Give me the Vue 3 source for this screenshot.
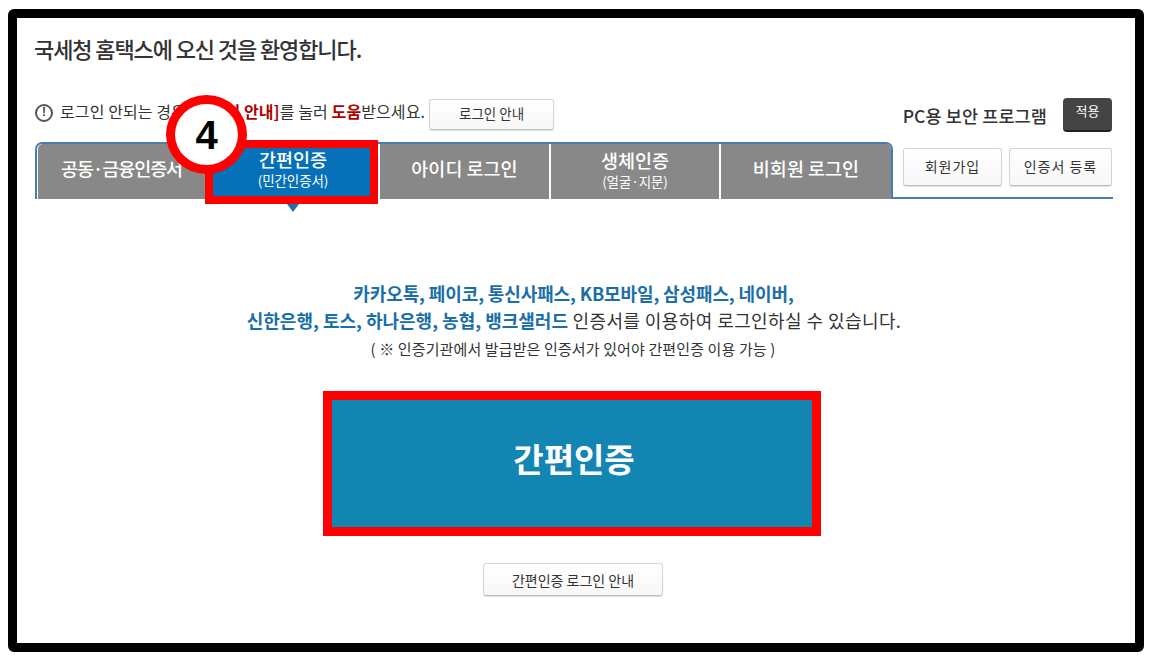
<script setup>
const tabs = [
  { name: '공동·금융인증서', w: 167 },
  { name: '간편인증', sub: '(민간인증서)', w: 173, active: true },
  { name: '아이디 로그인', w: 169 },
  { name: '생체인증', sub: '(얼굴·지문)', w: 168 },
  { name: '비회원 로그인', w: 170 }
]
</script>

<template>
  <main class="frame">
    <h1 class="title">국세청 홈택스에 오신 것을 환영합니다.</h1>

    <div class="notice-row">
      <div class="notice">
        <span class="info">!</span>
        <p>로그인 안되는 경우 <b>[로그인 안내]</b>를 눌러 <b>도움</b>받으세요.</p>
        <button class="btn help">로그인 안내</button>
      </div>
      <div class="security">
        <strong>PC용 보안 프로그램</strong>
        <button class="apply">적용</button>
      </div>
    </div>

    <div class="tab-row">
      <nav class="tabs">
        <div v-for="t in tabs" :key="t.name" class="tab" :class="{ active: t.active }" :style="{ width: t.w + 'px' }">
          <span class="tab-name">{{ t.name }}</span>
          <span v-if="t.sub" class="tab-sub">{{ t.sub }}</span>
        </div>
      </nav>
      <div class="side">
        <button class="btn join">회원가입</button>
        <button class="btn cert">인증서 등록</button>
      </div>
      <span class="step"><span>4</span></span>
    </div>

    <section class="body">
      <p class="line1">카카오톡, 페이코, 통신사패스, KB모바일, 삼성패스, 네이버,</p>
      <p class="line2"><em>신한은행, 토스, 하나은행, 농협, 뱅크샐러드</em> 인증서를 이용하여 로그인하실 수 있습니다.</p>
      <p class="note">( ※ 인증기관에서 발급받은 인증서가 있어야 간편인증 이용 가능 )</p>
      <button class="easy">간편인증</button>
      <button class="btn guide">간편인증 로그인 안내</button>
    </section>
  </main>
</template>

<style>
html, body { margin: 0; background: #fff; }
</style>

<style scoped>
.frame {
  box-sizing: border-box;
  width: 1136px;
  height: 643px;
  margin: 9px 0 0 8px;
  padding: 0 22px 0 17px;
  border: 9px solid #000;
  border-radius: 6px;
  background: #fff;
  overflow: hidden;
  font-family: "Noto Sans CJK KR", "Noto Sans", sans-serif;
  color: #333;
}
.title {
  margin: 0;
  padding-top: 15px;
  height: 34px;
  font-size: 22px;
  line-height: 30px;
  font-weight: 500;
  letter-spacing: -1.1px;
  color: #333;
}
.notice-row {
  display: flex;
  justify-content: space-between;
  margin-top: 32px;
  height: 43px;
}
.notice { display: flex; align-items: flex-start; }
.info {
  box-sizing: border-box;
  width: 18px;
  height: 18px;
  margin: 5px 7px 0 1px;
  border: 2.5px solid #555;
  border-radius: 50%;
  font: 700 12px/13px "Liberation Sans", sans-serif;
  text-align: center;
  color: #444;
}
.notice p {
  margin: 0 4px 0 0;
  font-size: 16px;
  line-height: 24px;
  letter-spacing: .1px;
  white-space: nowrap;
  color: #333;
}
.notice b { color: #b00000; font-weight: 700; }
.btn {
  box-sizing: border-box;
  border: 1px solid #d4d4d4;
  border-bottom-color: #bdbdbd;
  border-radius: 3px;
  background: linear-gradient(#fff, #f7f7f7);
  box-shadow: 0 1px 1px rgba(0, 0, 0, .12);
  font-family: inherit;
  color: #333;
  padding: 0;
  white-space: nowrap;
}
.help { width: 125px; height: 31px; font-size: 13.5px; padding-bottom: 3px; }
.security { display: flex; align-items: flex-start; }
.security strong {
  margin: 5px 16px 0 0;
  font-size: 17.5px;
  line-height: 24px;
  font-weight: 500;
  letter-spacing: .1px;
  color: #333;
}
.apply {
  box-sizing: border-box;
  width: 49px;
  height: 34px;
  margin-top: -1px;
  margin-right: 1px;
  padding: 0 0 7px;
  border: 0;
  border-bottom: 2px solid #222;
  border-radius: 4px;
  background: #444;
  color: #fff;
  font-family: inherit;
  font-size: 13px;
}
.tab-row { position: relative; display: flex; height: 58px; }
.tabs {
  box-sizing: border-box;
  flex: none;
  display: flex;
  gap: 2px;
  width: 858px;
  height: 57px;
  margin-left: 1px;
  padding: 0 1px;
  border: 2px solid #4a7ab8;
  border-bottom: 0;
  border-radius: 7px 7px 0 0;
}
.tab {
  box-sizing: border-box;
  flex: none;
  display: flex;
  flex-direction: column;
  align-items: center;
  justify-content: center;
  padding-bottom: 3px;
  background: #888;
  color: #fff;
}
.tab:first-child { border-radius: 5px 0 0 0; margin-right: -2px; }
.tab:first-child .tab-name { letter-spacing: -1.1px; }
.tab:last-child { border-radius: 0 5px 0 0; }
.tab-name:only-child { margin-bottom: 4px; }
.tab.active {
  position: relative;
  z-index: 1;
  height: 64px;
  margin-top: -4px;
  padding: 0 0 6px 3px;
  border: 8px solid #f00;
  background: #0670b8;
}
.tab.active::after {
  content: "";
  position: absolute;
  left: 50%;
  bottom: -16px;
  margin-left: -5px;
  border: 6px solid transparent;
  border-top: 8px solid #1f6fb5;
  border-bottom: 0;
}
.tab-name { font-size: 18.5px; line-height: 23px; font-weight: 500; }
.tab-sub { font-size: 13.5px; line-height: 19px; letter-spacing: -.1px; }
.side {
  display: flex;
  flex: 1;
  gap: 7px;
  justify-content: flex-end;
  height: 57px;
  padding: 6px 1px 0 10px;
  box-sizing: border-box;
  border-bottom: 2px solid #4a7ab8;
}
.side .btn { height: 38px; font-size: 14px; letter-spacing: 1px; padding-bottom: 2px; }
.join { width: 99px; }
.cert { width: 103px; }
.step {
  position: absolute;
  left: 132px;
  top: -47px;
  z-index: 2;
  box-sizing: border-box;
  width: 81px;
  height: 79px;
  display: flex;
  align-items: center;
  justify-content: center;
  border: 9px solid #f00;
  border-radius: 50%;
  background: #fff;
  color: #000;
  font: 700 40px/1 "Liberation Sans", sans-serif;
}
.body { display: flex; flex-direction: column; align-items: center; padding-top: 80px; margin-right: 3px; }
.body p { margin: 0; white-space: nowrap; }
.line1, .line2 em {
  font-style: normal;
  font-weight: 700;
  color: #1a6fa8;
}
.line1 { font-size: 18px; line-height: 27px; letter-spacing: -.12px; padding-left: 3px; }
.line2 { font-size: 18px; line-height: 27px; letter-spacing: .42px; color: #333; padding-left: 4px; }
.line2 em { letter-spacing: 0; }
.note { margin-top: 5px !important; font-size: 15px; line-height: 20px; letter-spacing: .12px; color: #333; padding-left: 2px; }
.easy {
  box-sizing: border-box;
  flex: none;
  width: 498px;
  height: 145px;
  margin-top: 32px;
  padding: 0 0 12px 4px;
  border: 9px solid #f00;
  background: #1285b2;
  color: #fff;
  font-family: inherit;
  font-size: 33px;
  font-weight: 700;
}
.guide { flex: none; width: 180px; height: 33px; margin: 27px 0 0 2px; font-size: 14px; }
</style>
